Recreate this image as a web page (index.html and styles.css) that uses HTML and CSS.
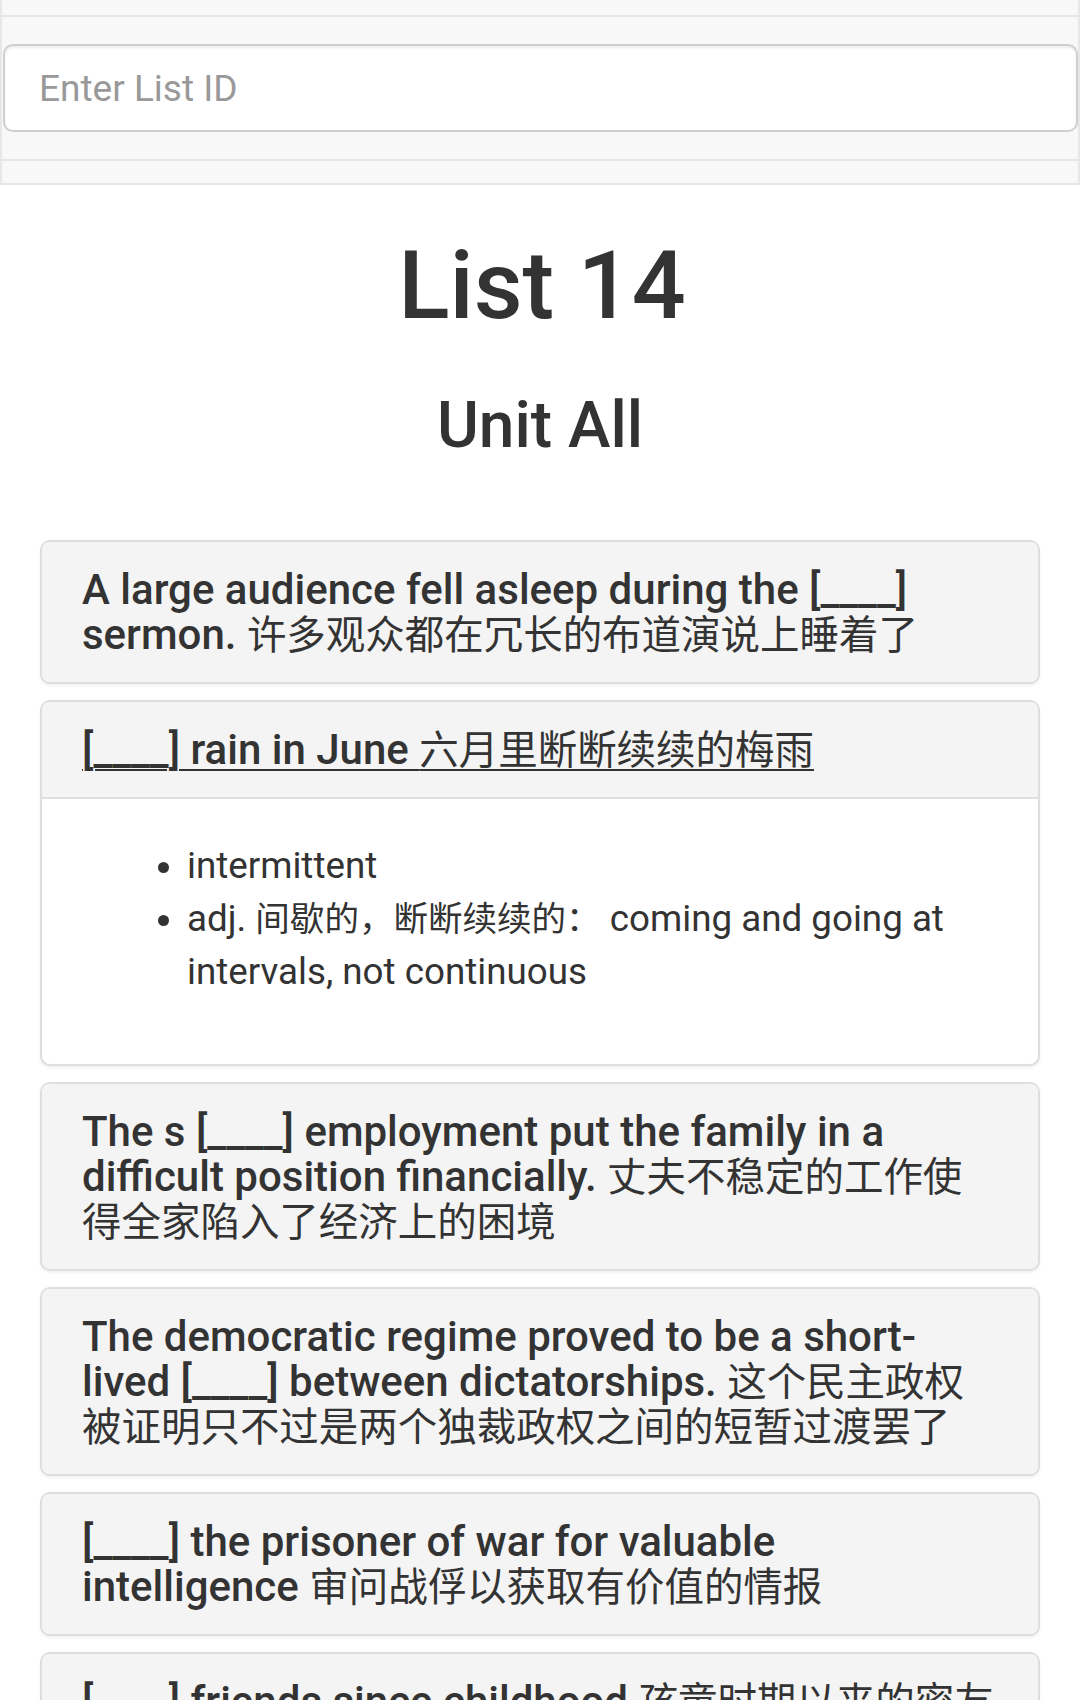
FILE: index.html
```html
<!DOCTYPE html>
<html lang="en">
<head>
<meta charset="utf-8">
<title>List 14</title>
<link rel="stylesheet" href="styles.css">
</head>
<body>
<header class="navbar">
  <div class="navbar-top"></div>
  <form class="navbar-form">
    <input class="form-control" type="text" placeholder="Enter List ID">
  </form>
  <div class="navbar-bottom"></div>
</header>

<main class="container">
  <h1 class="page-title">List 14</h1>
  <h3 class="page-subtitle">Unit All</h3>

  <div class="panel-group">
    <div class="panel">
      <div class="panel-heading">
        <h4 class="panel-title">A large audience fell asleep during the [____] sermon. <span class="zh">许多观众都在冗长的布道演说上睡着了</span></h4>
      </div>
    </div>

    <div class="panel">
      <div class="panel-heading">
        <h4 class="panel-title"><a class="panel-link" href="#">[____] rain in June <span class="zh">六月里断断续续的梅雨</span></a></h4>
      </div>
      <div class="panel-body">
        <ul class="defs">
          <li>intermittent</li>
          <li>adj. <span class="zh">间歇的，断断续续的：</span> coming and going at intervals, not continuous</li>
        </ul>
      </div>
    </div>

    <div class="panel">
      <div class="panel-heading">
        <h4 class="panel-title">The s [____] employment put the family in a difficult position financially. <span class="zh">丈夫不稳定的工作使得全家陷入了经济上的困境</span></h4>
      </div>
    </div>

    <div class="panel">
      <div class="panel-heading">
        <h4 class="panel-title">The democratic regime proved to be a short-lived [____] between dictatorships. <span class="zh">这个民主政权被证明只不过是两个独裁政权之间的短暂过渡罢了</span></h4>
      </div>
    </div>

    <div class="panel">
      <div class="panel-heading">
        <h4 class="panel-title">[____] the prisoner of war for valuable intelligence <span class="zh">审问战俘以获取有价值的情报</span></h4>
      </div>
    </div>

    <div class="panel">
      <div class="panel-heading">
        <h4 class="panel-title">[____] friends since childhood <span class="zh">孩童时期以来的密友</span></h4>
      </div>
    </div>
  </div>
</main>
</body>
</html>
```

FILE: styles.css
```css
html, body {
  margin: 0;
  padding: 0;
}

body {
  background: #fff;
  color: #333;
  font-family: Roboto, "Noto Sans CJK SC", sans-serif;
  font-size: 36.75px;
  line-height: 52.5px;
  overflow-x: hidden;
}

.zh {
  font-family: "Noto Sans CJK SC", sans-serif;
  font-weight: 400;
  font-size: 0.94em;
  line-height: 0.9;
}

/* ---------- top bar ---------- */
.navbar {
  background: #f8f8f8;
  border: 2px solid #e7e7e7;
  border-top: none;
  padding: 0;
}

.navbar-top {
  height: 15px;
  border-bottom: 2px solid #e7e7e7;
}

.navbar-form {
  margin: 0;
  padding: 27px 0 27px 1px;
}

.form-control {
  display: block;
  box-sizing: border-box;
  width: 100%;
  height: 88px;
  margin: 0;
  padding: 0 34px;
  border: 2px solid #cfcfcf;
  border-radius: 10px;
  background: #fff;
  box-shadow: inset 0 2px 2px rgba(0, 0, 0, 0.075);
  font-family: Roboto, sans-serif;
  font-size: 37px;
  color: #555;
  outline: none;
}

.form-control::placeholder {
  color: #999;
}

.navbar-bottom {
  height: 22px;
  border-top: 2px solid #e7e7e7;
}

/* ---------- content ---------- */
.container {
  padding: 0 40px;
}

.page-title {
  margin: 49px 0 0;
  text-align: center;
  font-size: 95px;
  line-height: 1.1;
  font-weight: 500;
  padding-left: 4px;
}

.page-subtitle {
  margin: 52px 0 0;
  text-align: center;
  font-size: 64px;
  line-height: 1.1;
  font-weight: 500;
}

.panel-group {
  margin-top: 79px;
  display: flex;
  flex-direction: column;
  gap: 16px;
}

.panel {
  border: 2px solid #dedede;
  border-radius: 10px;
  background: #fff;
  box-shadow: 0 2px 3px rgba(0, 0, 0, 0.06);
  overflow: hidden;
}

.panel-heading {
  background: #f4f4f4;
  padding: 25px 40px;
}

.panel-title {
  margin: 0;
  font-size: 42px;
  line-height: 45px;
  font-weight: 500;
  color: #333;
}

.panel-link {
  color: #333;
  text-decoration: underline;
  text-decoration-thickness: 2px;
  text-underline-offset: 5px;
}

.panel-body {
  border-top: 2px solid #dedede;
  padding: 40px;
}

.defs {
  margin: 0 0 26px;
  padding-left: 105px;
  line-height: 53px;
}
```
